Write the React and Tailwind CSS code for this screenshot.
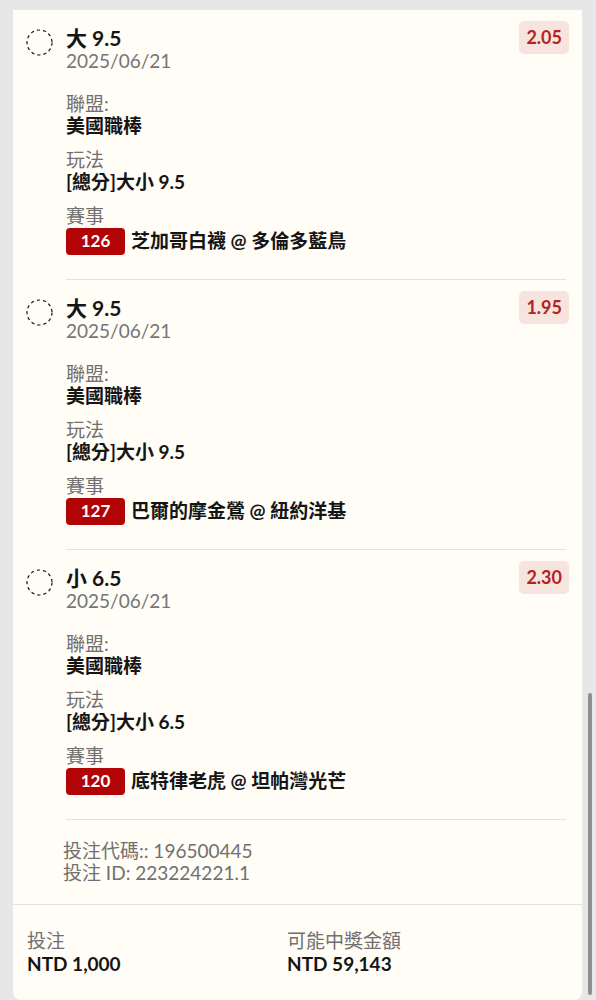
import React from 'react';

const bets = [
    { pick: '大 9.5', odds: '2.05', market: '[總分]大小 9.5', no: '126', match: '芝加哥白襪 @ 多倫多藍鳥' },
    { pick: '大 9.5', odds: '1.95', market: '[總分]大小 9.5', no: '127', match: '巴爾的摩金鶯 @ 紐約洋基' },
    { pick: '小 6.5', odds: '2.30', market: '[總分]大小 6.5', no: '120', match: '底特律老虎 @ 坦帕灣光芒' },
];

const DashedCircle = () => (
    <svg width="27" height="27" viewBox="0 0 27 27" fill="none">
        <circle cx="13.5" cy="13.5" r="12.5" stroke="#111" strokeWidth="1.2" strokeDasharray="3.2 3" />
    </svg>
);

const Field = ({ label, children, className = '' }) => (
    <div className={className}>
        <div className="text-[19px] leading-[22px] text-[#707070]">{label}</div>
        {children}
    </div>
);

const BetItem = ({ bet }) => (
    <div className="flex pt-[11px] pl-[13px] pr-[13px]">
        <div className="w-[27px] mt-[8px] shrink-0">
            <DashedCircle />
        </div>
        <div className="flex-1 ml-[13px]">
            <div className="flex justify-between items-start">
                <div className="mt-[5px]">
                    <div className="text-[21px] leading-[24px] font-bold text-[#151515]">{bet.pick}</div>
                    <div className="text-[19px] leading-[22px] text-[#757575]">2025/06/21</div>
                </div>
                <div className="h-[33px] px-[7px] flex items-center rounded-[5px] bg-[#f7e4df] text-[18px] font-bold text-[#b42323]">
                    {bet.odds}
                </div>
            </div>
            <Field label="聯盟:" className="mt-[21px]">
                <div className="text-[19px] leading-[22px] font-bold text-[#151515]">美國職棒</div>
            </Field>
            <Field label="玩法" className="mt-[12px]">
                <div className="text-[19px] leading-[22px] font-bold text-[#151515]">{bet.market}</div>
            </Field>
            <Field label="賽事" className="mt-[12px]">
                <div className="flex items-center h-[28px]">
                    <span className="w-[59px] h-[27px] rounded-[4px] bg-[#b20404] text-white text-[17px] font-bold flex items-center justify-center">
                        {bet.no}
                    </span>
                    <span className="ml-[6px] text-[19px] font-bold text-[#151515]">{bet.match}</span>
                </div>
            </Field>
            <div className="mt-[24px] mr-[3px] h-px bg-[#e6e3dc]" />
        </div>
    </div>
);

const App = () => {
    return (
        <div
            className="min-h-screen bg-[#e7e7e9] flex pt-[10px] pl-[13px]"
            style={{ fontFamily: '"Lato", "Noto Sans CJK TC", sans-serif' }}
        >
            <div className="w-[569px] bg-[#fffdf6] rounded-b-lg flex flex-col">
                {bets.map((bet, i) => (
                    <BetItem key={i} bet={bet} />
                ))}

                <div className="pl-[50px] mt-[20px] text-[19px] leading-[22px] text-[#707070]">
                    <div>投注代碼:: 196500445</div>
                    <div>投注 ID: 223224221.1</div>
                </div>

                <div className="mt-[20px] h-px bg-[#e6e3dc]" />

                <div className="grid grid-cols-[260px_1fr] pl-[14px] pt-[25px] pb-[11px]">
                    <div>
                        <div className="text-[19px] leading-[22px] text-[#707070]">投注</div>
                        <div className="text-[19px] leading-[24px] font-bold text-[#151515]">NTD 1,000</div>
                    </div>
                    <div>
                        <div className="text-[19px] leading-[22px] text-[#707070]">可能中獎金額</div>
                        <div className="text-[19px] leading-[24px] font-bold text-[#151515]">NTD 59,143</div>
                    </div>
                </div>
            </div>

            <div className="ml-[6px]">
                <div className="mt-[683px] h-[302px] w-[4px] rounded-full bg-[#8f8f8f]" />
            </div>
        </div>
    );
};

export default App;
